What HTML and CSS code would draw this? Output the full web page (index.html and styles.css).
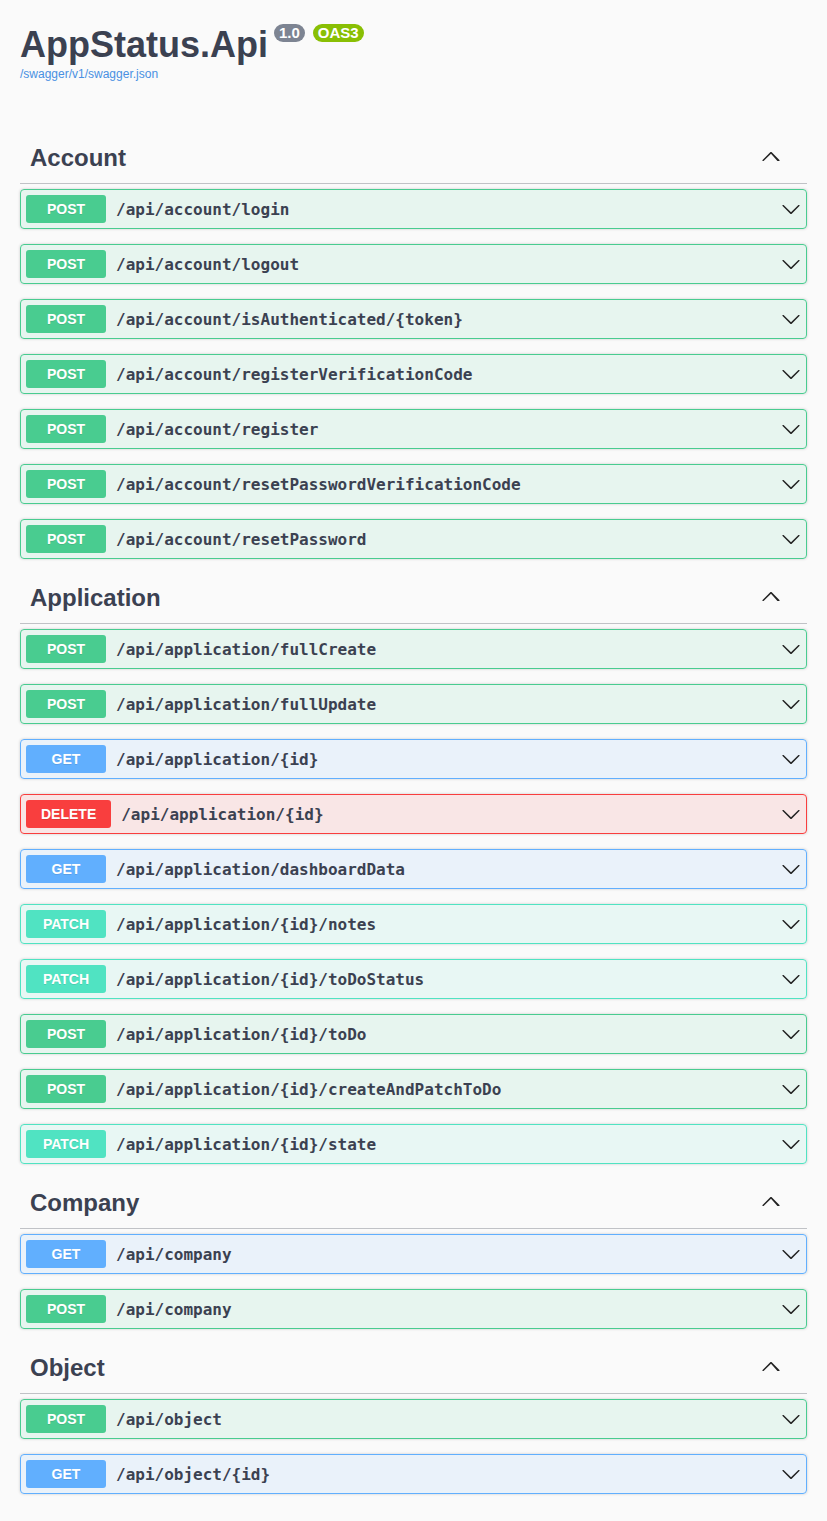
FILE: index.html
```html
<!DOCTYPE html>
<html lang="en">
<head>
<meta charset="utf-8">
<title>AppStatus.Api</title>
<link rel="stylesheet" href="styles.css">
</head>
<body>
<svg class="defs" width="0" height="0" aria-hidden="true">
  <defs>
    <symbol id="arrow-down" viewBox="0 0 20 20"><path d="M17.418 6.109c.272-.268.709-.268.979 0s.271.701 0 .969l-7.908 7.83c-.27.268-.707.268-.979 0l-7.908-7.83c-.27-.268-.27-.701 0-.969.271-.268.709-.268.979 0L10 13.25l7.418-7.141z"/></symbol>
    <symbol id="arrow-up" viewBox="0 0 20 20"><path d="M17.418 14.908c-.272.268-.709.268-.979 0L10 7.728l-7.418 7.18c-.27.268-.707.268-.979 0-.27-.268-.27-.701 0-.969l7.908-7.83c.27-.268.707-.268.979 0l7.908 7.83c.27.268.27.701 0 .969z"/></symbol>
  </defs>
</svg>
<div class="wrapper">
  <div class="info">
    <h2 class="title"><span class="title-text">AppStatus.Api</span><span class="badge version">1.0</span><span class="badge oas">OAS3</span></h2>
    <a class="link" href="#">/swagger/v1/swagger.json</a>
  </div>

  <section class="tag-section">
    <h3 class="tag"><span class="tag-name">Account</span><svg class="tag-arrow"><use href="#arrow-up"/></svg></h3>
    <div class="op post"><span class="method">POST</span><span class="path">/api/account/login</span><svg class="arrow"><use href="#arrow-down"/></svg></div>
    <div class="op post"><span class="method">POST</span><span class="path">/api/account/logout</span><svg class="arrow"><use href="#arrow-down"/></svg></div>
    <div class="op post"><span class="method">POST</span><span class="path">/api/account/isAuthenticated/{token}</span><svg class="arrow"><use href="#arrow-down"/></svg></div>
    <div class="op post"><span class="method">POST</span><span class="path">/api/account/registerVerificationCode</span><svg class="arrow"><use href="#arrow-down"/></svg></div>
    <div class="op post"><span class="method">POST</span><span class="path">/api/account/register</span><svg class="arrow"><use href="#arrow-down"/></svg></div>
    <div class="op post"><span class="method">POST</span><span class="path">/api/account/resetPasswordVerificationCode</span><svg class="arrow"><use href="#arrow-down"/></svg></div>
    <div class="op post"><span class="method">POST</span><span class="path">/api/account/resetPassword</span><svg class="arrow"><use href="#arrow-down"/></svg></div>
  </section>

  <section class="tag-section">
    <h3 class="tag"><span class="tag-name">Application</span><svg class="tag-arrow"><use href="#arrow-up"/></svg></h3>
    <div class="op post"><span class="method">POST</span><span class="path">/api/application/fullCreate</span><svg class="arrow"><use href="#arrow-down"/></svg></div>
    <div class="op post"><span class="method">POST</span><span class="path">/api/application/fullUpdate</span><svg class="arrow"><use href="#arrow-down"/></svg></div>
    <div class="op get"><span class="method">GET</span><span class="path">/api/application/{id}</span><svg class="arrow"><use href="#arrow-down"/></svg></div>
    <div class="op delete"><span class="method">DELETE</span><span class="path">/api/application/{id}</span><svg class="arrow"><use href="#arrow-down"/></svg></div>
    <div class="op get"><span class="method">GET</span><span class="path">/api/application/dashboardData</span><svg class="arrow"><use href="#arrow-down"/></svg></div>
    <div class="op patch"><span class="method">PATCH</span><span class="path">/api/application/{id}/notes</span><svg class="arrow"><use href="#arrow-down"/></svg></div>
    <div class="op patch"><span class="method">PATCH</span><span class="path">/api/application/{id}/toDoStatus</span><svg class="arrow"><use href="#arrow-down"/></svg></div>
    <div class="op post"><span class="method">POST</span><span class="path">/api/application/{id}/toDo</span><svg class="arrow"><use href="#arrow-down"/></svg></div>
    <div class="op post"><span class="method">POST</span><span class="path">/api/application/{id}/createAndPatchToDo</span><svg class="arrow"><use href="#arrow-down"/></svg></div>
    <div class="op patch"><span class="method">PATCH</span><span class="path">/api/application/{id}/state</span><svg class="arrow"><use href="#arrow-down"/></svg></div>
  </section>

  <section class="tag-section">
    <h3 class="tag"><span class="tag-name">Company</span><svg class="tag-arrow"><use href="#arrow-up"/></svg></h3>
    <div class="op get"><span class="method">GET</span><span class="path">/api/company</span><svg class="arrow"><use href="#arrow-down"/></svg></div>
    <div class="op post"><span class="method">POST</span><span class="path">/api/company</span><svg class="arrow"><use href="#arrow-down"/></svg></div>
  </section>

  <section class="tag-section">
    <h3 class="tag"><span class="tag-name">Object</span><svg class="tag-arrow"><use href="#arrow-up"/></svg></h3>
    <div class="op post"><span class="method">POST</span><span class="path">/api/object</span><svg class="arrow"><use href="#arrow-down"/></svg></div>
    <div class="op get"><span class="method">GET</span><span class="path">/api/object/{id}</span><svg class="arrow"><use href="#arrow-down"/></svg></div>
  </section>
</div>
</body>
</html>
```

FILE: styles.css
```css
* { box-sizing: border-box; }

html, body {
  margin: 0;
  padding: 0;
  background: #fafafa;
}

body {
  font-family: "Liberation Sans", Arial, sans-serif;
  color: #3b4151;
}

.defs {
  position: absolute;
  width: 0;
  height: 0;
  overflow: hidden;
}

.wrapper {
  padding: 0 20px;
}

.info {
  padding-top: 24px;
  margin-bottom: 53px;
}

.title {
  display: flex;
  align-items: flex-start;
  margin: 0;
  font-size: 36px;
  font-weight: 700;
  line-height: 41px;
  color: #3b4151;
}

.badge {
  display: inline-block;
  margin-top: 0;
  padding: 2px 5px;
  border-radius: 57px;
  font-size: 15px;
  line-height: 14px;
  font-weight: 700;
  color: #fff;
}

.version {
  margin-left: 6px;
  background: #7d8492;
}

.oas {
  margin-left: 8px;
  background: #89bf04;
}

.link {
  display: block;
  margin-top: 2px;
  font-size: 12px;
  line-height: 14px;
  color: #4990e2;
  text-decoration: none;
}

.tag-section {
  display: flex;
  flex-direction: column;
}

.tag {
  display: flex;
  align-items: flex-start;
  justify-content: space-between;
  margin: 0 0 5px;
  padding: 10px 26px 10px 10px;
  min-height: 50px;
  border-bottom: 1px solid rgba(59, 65, 81, .3);
  font-size: 24px;
  font-weight: 700;
  line-height: 27px;
  color: #3b4151;
}

.tag-arrow {
  width: 20px;
  height: 20px;
  margin-top: 2px;
  fill: #222;
}

.op {
  display: flex;
  align-items: center;
  margin: 0 0 15px;
  padding: 5px;
  border: 1px solid #000;
  border-radius: 4px;
  box-shadow: 0 0 3px rgba(0, 0, 0, .19);
}

.method {
  min-width: 80px;
  padding: 6px 15px;
  border-radius: 3px;
  font-size: 14px;
  font-weight: 700;
  line-height: 16px;
  text-align: center;
  color: #fff;
  text-shadow: 0 1px 0 rgba(0, 0, 0, .1);
}

.path {
  flex: 1;
  padding: 0 10px;
  font-family: "DejaVu Sans Mono", monospace;
  font-size: 16px;
  font-weight: 700;
  color: #3b4151;
}

.arrow {
  width: 20px;
  height: 20px;
  fill: #222;
}

.post { background: rgba(73, 204, 144, .1); border-color: #49cc90; }
.post .method { background: #49cc90; }

.get { background: rgba(97, 175, 254, .1); border-color: #61affe; }
.get .method { background: #61affe; }

.delete { background: rgba(249, 62, 62, .1); border-color: #f93e3e; }
.delete .method { background: #f93e3e; }

.patch { background: rgba(80, 227, 194, .1); border-color: #50e3c2; }
.patch .method { background: #50e3c2; }
```
